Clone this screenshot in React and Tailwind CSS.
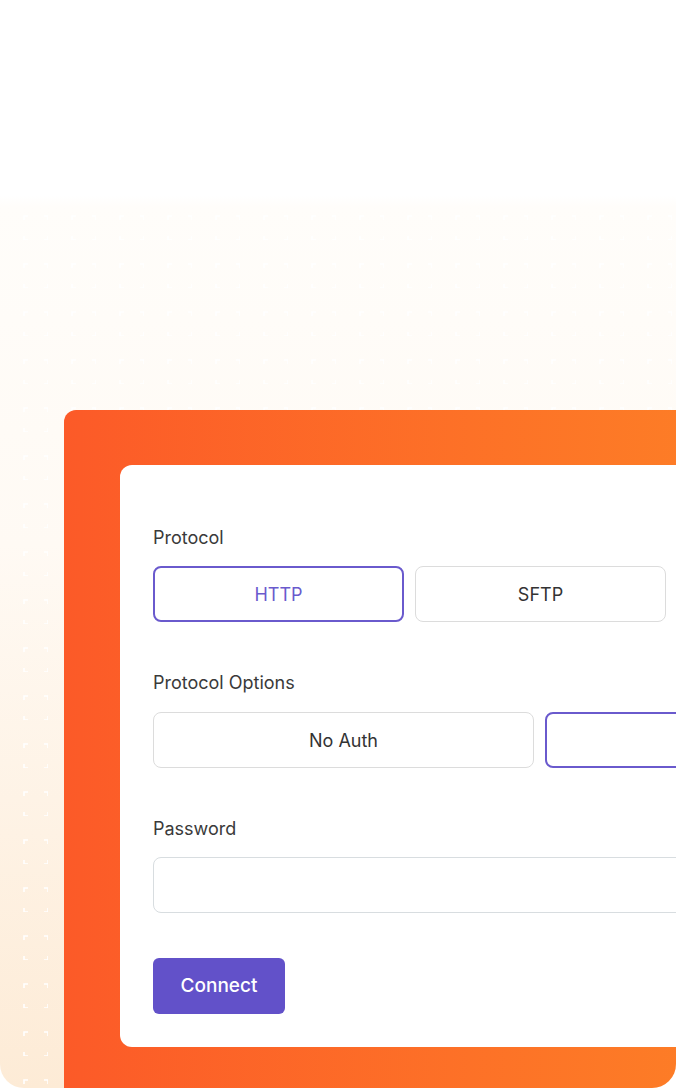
const Brackets = () => (
  <svg className="absolute inset-0 h-full w-full" aria-hidden="true">
    <defs>
      <pattern id="brk" width="48" height="48" patternUnits="userSpaceOnUse">
        <path
          d="M24 28V24H28 M44 24H48V28 M48 44V48H44 M28 48H24V44"
          fill="none"
          stroke="#ffffff"
          strokeWidth="1.6"
        />
      </pattern>
    </defs>
    <rect width="100%" height="100%" fill="url(#brk)" />
  </svg>
)

const Choice = ({ label, active, width }) => (
  <button
    className={`flex h-14 shrink-0 items-center justify-center rounded-lg bg-white text-[18px] ${width} ${
      active
        ? "border-2 border-[#6a5acd] text-[#6a5acd]"
        : "border border-[#dcdcdc] text-[#333333]"
    }`}
  >
    {label}
  </button>
)

export default function App() {
  return (
    <div
      className="relative h-[1088px] w-[676px] overflow-hidden rounded-3xl bg-[linear-gradient(to_bottom,#ffffff_18%,#fffdfa_19%,#fffaf4_50%,#fdebd6_100%)]"
      style={{ fontFamily: "Inter, 'Noto Sans', sans-serif" }}
    >
      <Brackets />
      <div className="relative ml-16 mt-[410px] h-[700px] w-[900px] rounded-tl-xl rounded-br-[20px] bg-gradient-to-r from-[#fc5a28] to-[#fd8a25] pt-[55px] pl-14">
        <div className="w-[843px] rounded-xl bg-white px-[33px] pb-[33px] pt-[61px]">
          <div className="text-[18px] leading-6 text-[#3a3a3a]">Protocol</div>
          <div className="mt-4 flex gap-[11px]">
            <Choice label="HTTP" active width="w-[251px]" />
            <Choice label="SFTP" width="w-[251px]" />
            <Choice label="" width="w-[251px]" />
          </div>

          <div className="mt-[49px] text-[18px] leading-6 text-[#3a3a3a]">Protocol Options</div>
          <div className="mt-[17px] flex gap-[11px]">
            <Choice label="No Auth" width="w-[381px]" />
            <Choice label="" active width="w-[381px]" />
          </div>

          <div className="mt-[49px] text-[18px] leading-6 text-[#3a3a3a]">Password</div>
          <input
            type="password"
            className="mt-[16px] block h-14 w-full rounded-lg border border-[#d8dde0] bg-white px-4 outline-none"
          />

          <button className="mt-[45px] flex h-14 w-[132px] items-center justify-center rounded-md bg-[#6251c9] text-[19px] font-medium text-white">
            Connect
          </button>
        </div>
      </div>
    </div>
  )
}
